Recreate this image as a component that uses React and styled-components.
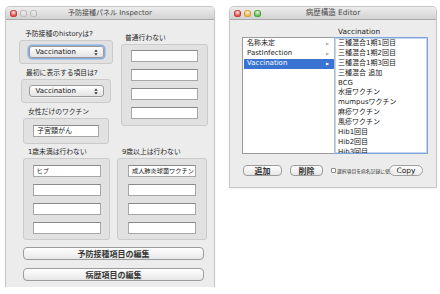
import styled, { createGlobalStyle } from "styled-components"

const GlobalStyle = createGlobalStyle`
  html, body {
    margin: 0;
    padding: 0;
    background: #fff;
  }
  body {
    font-family: "DejaVu Sans", "Noto Sans CJK JP", sans-serif;
    color: #1a1a1a;
  }
  * {
    box-sizing: border-box;
  }
`

const leftFields = [
  { label: "予防接種のhistoryは?", inset: 0, labelPad: 6, height: 24, popup: true, focused: true },
  { label: "最初に表示する項目は?", inset: 2, labelPad: 5, height: 24, popup: true },
  { label: "女性だけのワクチン", inset: 4, labelPad: 5, height: 26, value: "子宮頸がん" },
]

const bottomGroups = [
  { label: "1歳未満は行わない", values: ["ヒブ", "", "", ""], width: 87, pad: "6px 9px" },
  { label: "9歳以上は行わない", values: ["成人肺炎球菌ワクチン", "", "", ""], width: 90, pad: "6px 10px" },
]

const categories = [
  { name: "名称未定" },
  { name: "PastInfection" },
  { name: "Vaccination", selected: true },
]

const vaccines = [
  "三種混合1期1回目",
  "三種混合1期2回目",
  "三種混合1期3回目",
  "三種混合 追加",
  "BCG",
  "水痘ワクチン",
  "mumpusワクチン",
  "麻疹ワクチン",
  "風疹ワクチン",
  "Hib1回目",
  "Hib2回目",
  "Hib3回目",
]

const Lights = ({ active }) => (
  <LightRow>
    <Light $color="#e2463f" $edge="#b8322c" />
    <Light $color={active ? "#f1b43a" : "#d8d8d8"} $edge={active ? "#c9902a" : "#a9a9a9"} />
    <Light $color={active ? "#5bbd48" : "#d8d8d8"} $edge={active ? "#3f9433" : "#a9a9a9"} />
  </LightRow>
)

const PopUp = ({ focused }) => (
  <PopButton $focused={focused}>
    <span>Vaccination</span>
    <svg width="4" height="7" viewBox="0 0 4 7">
      <path d="M0.3 2.8 L2 0.6 L3.7 2.8 Z M0.3 4.2 L2 6.4 L3.7 4.2 Z" fill="#333" />
    </svg>
  </PopButton>
)

export default function App() {
  return (
    <>
      <GlobalStyle />
      <Desktop>
        <Window $width={208} $height={280}>
          <TitleBar>
            <Lights />
            <Title>予防接種パネル Inspector</Title>
            <span />
          </TitleBar>
          <InspectorBody>
            <TopSection>
              <Column>
                {leftFields.map(f => (
                  <Field key={f.label} $inset={f.inset}>
                    <Label $pad={f.labelPad}>{f.label}</Label>
                    <GroupBox $height={f.height} $center>
                      {f.popup ? <PopUp focused={f.focused} /> : <TextField $width={66}>{f.value}</TextField>}
                    </GroupBox>
                  </Field>
                ))}
              </Column>
              <Field $top={4}>
                <Label $pad={4}>普通行わない</Label>
                <GroupBox $height={82} $pad="5px 9px 6px">
                  {[0, 1, 2, 3].map(i => (
                    <TextField key={i} />
                  ))}
                </GroupBox>
              </Field>
            </TopSection>
            <BottomSection>
              {bottomGroups.map(g => (
                <Field key={g.label} $width={g.width}>
                  <Label $pad={5}>{g.label}</Label>
                  <GroupBox $height={82} $pad={g.pad}>
                    {g.values.map((v, i) => (
                      <TextField key={i} $width={68} $small>
                        {v}
                      </TextField>
                    ))}
                  </GroupBox>
                </Field>
              ))}
            </BottomSection>
            <WideButtons>
              <PushButton $width={181}>予防接種項目の編集</PushButton>
              <PushButton $width={181}>病歴項目の編集</PushButton>
            </WideButtons>
          </InspectorBody>
        </Window>

        <Window $width={206} $height={180}>
          <TitleBar>
            <Lights active />
            <Title $size={7.5}>病歴構造 Editor</Title>
            <span />
          </TitleBar>
          <EditorBody>
            <Browser>
              <ColumnTitle />
              <ColumnTitle>Vaccination</ColumnTitle>
              <BrowserColumn>
                {categories.map(c => (
                  <Row key={c.name} $selected={c.selected}>
                    <RowText>{c.name}</RowText>
                    <Arrow $selected={c.selected}>▶</Arrow>
                  </Row>
                ))}
              </BrowserColumn>
              <BrowserColumn $focused>
                {vaccines.map(v => (
                  <Row key={v}>
                    <RowText>{v}</RowText>
                  </Row>
                ))}
              </BrowserColumn>
            </Browser>
            <ButtonBar>
              <PushButton $width={39} $height={11}>追加</PushButton>
              <PushButton $width={33} $height={11}>削除</PushButton>
              <CheckLabel>
                <CheckBox />
                <CheckText>選択項目を病名記録に使用</CheckText>
              </CheckLabel>
              <CopyButton>Copy</CopyButton>
            </ButtonBar>
          </EditorBody>
        </Window>
      </Desktop>
    </>
  )
}

const Desktop = styled.div`
  display: flex;
  align-items: flex-start;
  gap: 16px;
  padding: 7px 0 0 6px;
`

const Window = styled.div`
  width: ${p => p.$width}px;
  height: ${p => p.$height}px;
  background: #ececec;
  border-radius: 4px 4px 0 0;
  box-shadow: 0 0 0 1px #c6c6c6, 0 1px 3px rgba(0, 0, 0, 0.12);
  overflow: hidden;
  display: flex;
  flex-direction: column;
`

const TitleBar = styled.div`
  height: 13px;
  flex: none;
  display: grid;
  grid-template-columns: 1fr auto 1fr;
  align-items: center;
  background: linear-gradient(#ededed, #d2d2d2);
  border-bottom: 1px solid #a9a9a9;
`

const LightRow = styled.div`
  display: flex;
  gap: 3px;
  padding-left: 4px;
`

const Light = styled.span`
  width: 7px;
  height: 7px;
  border-radius: 50%;
  background: radial-gradient(circle at 50% 35%, #fff6 0, ${p => p.$color} 60%);
  box-shadow: inset 0 0 0 0.6px ${p => p.$edge};
`

const Title = styled.div`
  font-size: ${p => p.$size || 7}px;
  line-height: 12px;
  color: #4a4a4a;
  white-space: nowrap;
`

const InspectorBody = styled.div`
  padding: 10px 6px 6px 13px;
  display: flex;
  flex-direction: column;
`

const TopSection = styled.div`
  display: grid;
  grid-template-columns: 94px 87px;
  column-gap: 8px;
  align-items: start;
`

const Column = styled.div`
  display: flex;
  flex-direction: column;
  gap: 5px;
`

const Field = styled.div`
  display: flex;
  flex-direction: column;
  margin: 0 ${p => p.$inset || 0}px;
  padding-top: ${p => p.$top || 0}px;
  width: ${p => (p.$width ? `${p.$width}px` : "auto")};
`

const Label = styled.div`
  font-size: 6.8px;
  line-height: 9px;
  height: 9px;
  margin-bottom: 1px;
  padding-left: ${p => p.$pad}px;
  color: #2b2b2b;
  white-space: nowrap;
`

const GroupBox = styled.div`
  height: ${p => p.$height}px;
  background: #e1e1e1;
  border: 1px solid #cbcbcb;
  border-radius: 3px;
  display: flex;
  flex-direction: column;
  gap: 7px;
  align-items: center;
  justify-content: ${p => (p.$center ? "center" : "flex-start")};
  padding: ${p => p.$pad || "0"};
`

const PopButton = styled.div`
  width: 75px;
  height: 12px;
  display: flex;
  align-items: center;
  justify-content: space-between;
  padding: 0 5px 0 6px;
  font-size: 7px;
  color: #111;
  background: linear-gradient(#ffffff, #f0f0f0 50%, #e4e4e4);
  border: 1px solid #9a9a9a;
  border-radius: 3px;
  box-shadow: ${p => (p.$focused ? "0 0 0 1.5px #86aee6" : "0 0.5px 0 #fff")};
`

const TextField = styled.div`
  width: ${p => p.$width || 67}px;
  height: 12px;
  flex: none;
  background: #fff;
  border: 1px solid #a6a6a6;
  border-top-color: #8a8a8a;
  font-size: ${p => (p.$small ? 6.2 : 7)}px;
  line-height: 10px;
  padding: 0 3px;
  white-space: nowrap;
  overflow: hidden;
  color: #222;
`

const BottomSection = styled.div`
  display: flex;
  gap: 7px;
  margin: 4px 0 0 4px;
`

const WideButtons = styled.div`
  display: flex;
  flex-direction: column;
  gap: 8px;
  margin: 7px 0 0 4px;
`

const PushButton = styled.div`
  width: ${p => p.$width}px;
  height: ${p => p.$height || 13}px;
  display: flex;
  align-items: center;
  justify-content: center;
  font-size: 8px;
  font-weight: bold;
  color: #383838;
  background: linear-gradient(#ffffff, #f3f3f3 50%, #e6e6e6);
  border: 1px solid #9c9c9c;
  border-radius: 4px;
  white-space: nowrap;
  flex: none;
`

const EditorBody = styled.div`
  padding: 7px 8px 0 12px;
  display: flex;
  flex-direction: column;
`

const Browser = styled.div`
  display: grid;
  grid-template-columns: 92px 94px;
  grid-template-rows: 10px 117px;
`

const ColumnTitle = styled.div`
  font-size: 7.3px;
  line-height: 10px;
  padding-left: 4px;
  color: #222;
`

const BrowserColumn = styled.div`
  background: #fff;
  overflow: hidden;
  padding-top: 1px;
  border: 1px solid #9b9b9b;
  ${p =>
    p.$focused
      ? `
    border-color: #7fa3d6;
    border-left-color: #b9b9b9;
    box-shadow: inset 0 0 0 1px #c3d7f2;
  `
      : `
    border-right: none;
    padding-left: 1px;
  `}
`

const Row = styled.div`
  height: 9.9px;
  display: flex;
  align-items: center;
  justify-content: space-between;
  padding: 0 3px;
  background: ${p => (p.$selected ? "#3a74d3" : "transparent")};
  color: ${p => (p.$selected ? "#fff" : "#1a1a1a")};
`

const RowText = styled.span`
  font-size: 7px;
  line-height: 9.9px;
  white-space: nowrap;
`

const Arrow = styled.span`
  font-size: 4px;
  color: ${p => (p.$selected ? "#fff" : "#b0b0b0")};
  padding-right: 2px;
`

const ButtonBar = styled.div`
  display: flex;
  align-items: center;
  gap: 8px;
  margin: 11px 0 0 1px;
`

const CheckLabel = styled.div`
  display: flex;
  align-items: center;
  gap: 1px;
  width: 58px;
  flex: none;
  margin-right: -8px;
`

const CheckBox = styled.span`
  width: 5px;
  height: 5px;
  flex: none;
  background: #fff;
  border: 0.6px solid #8a8a8a;
  border-radius: 1px;
`

const CheckText = styled.span`
  font-size: 4.8px;
  white-space: nowrap;
  color: #333;
`

const CopyButton = styled.div`
  width: 34px;
  height: 11px;
  flex: none;
  display: flex;
  align-items: center;
  justify-content: center;
  font-size: 7.5px;
  color: #222;
  background: linear-gradient(rgba(255, 255, 255, 0.9), rgba(236, 236, 236, 0.9));
  border: 1px solid #a0a0a0;
  border-radius: 6px;
`
